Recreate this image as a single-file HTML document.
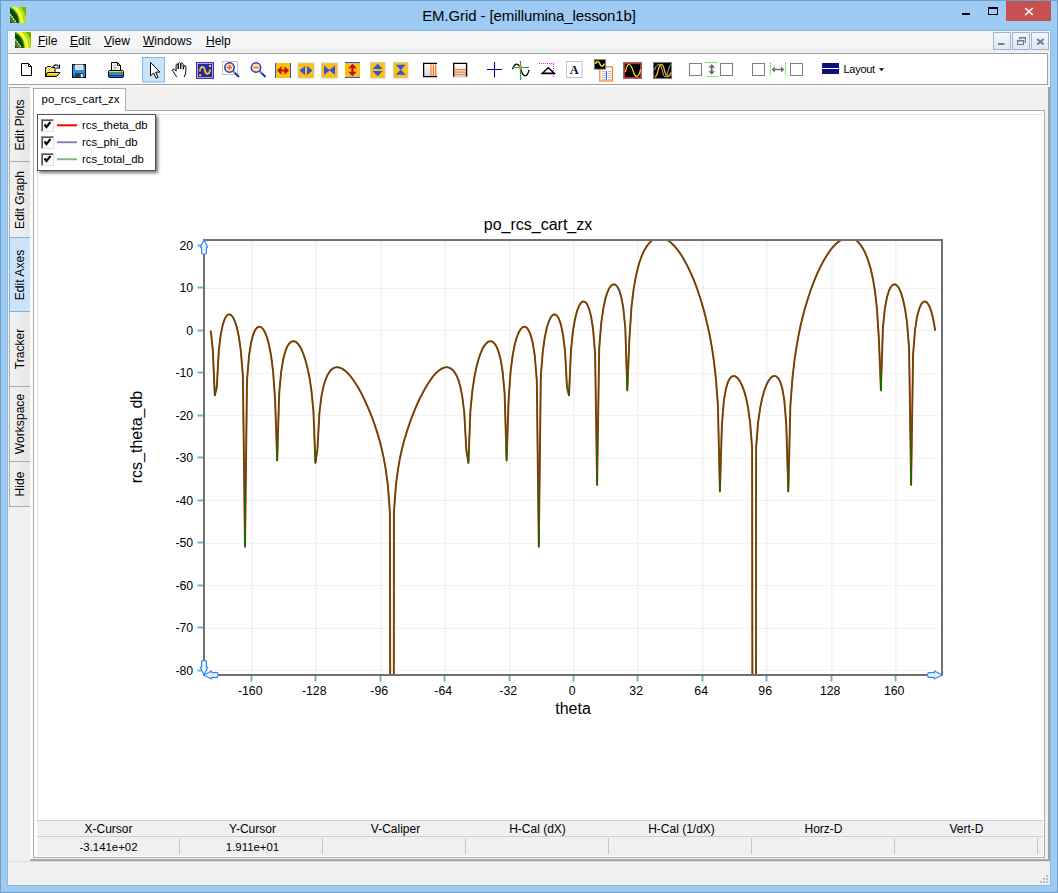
<!DOCTYPE html>
<html><head><meta charset="utf-8"><title>EM.Grid</title>
<style>
html,body{margin:0;padding:0}
body{width:1058px;height:893px;position:relative;overflow:hidden;background:#9dcbf3;font-family:"Liberation Sans",sans-serif;font-size:12px;color:#000}
.abs,.abs>*{position:absolute}
#frame{position:absolute;left:0;top:0;width:1056px;height:891px;border:1px solid #6f9fc9}
#client{position:absolute;left:7px;top:30px;width:1042px;height:854px;background:#f0f0f0;border:1px solid #8db9e3}
#title{position:absolute;left:0;top:6px;width:1058px;text-align:center;font-size:15px;line-height:20px;color:#000;letter-spacing:-0.1px}
#menubar{position:absolute;left:8px;top:31px;width:1042px;height:18px;background:#f5f6f7}
#menugap{position:absolute;left:8px;top:49px;width:1042px;height:4px;background:linear-gradient(#eaebec,#f3f3f4)}
.mi{position:absolute;top:34px;font-size:12px;line-height:15px;color:#000}
.mi u{text-decoration:underline;text-underline-offset:1px}
#toolbar{position:absolute;left:8px;top:53px;width:1038px;height:30px;background:#fff;border:1px solid #a0a0a0;border-left:1px solid #f4f4f4}
.mdib{position:absolute;top:32px;width:16px;height:16px;border:1px solid #9fb4cc;background:linear-gradient(#f3f7fb,#dde8f3)}
.stab{position:absolute;left:9px;width:21px;border:1px solid #acacac;border-right:none;background:linear-gradient(90deg,#f2f2f2,#e6e6e6);box-sizing:border-box}
.stab span{position:absolute;left:50%;top:50%;white-space:nowrap;transform:translate(-50%,-50%) rotate(-90deg);font-size:12.1px}
.stab.sel{background:#cce4fb;border-color:#7ab5ea}
#tab{position:absolute;left:33px;top:88px;width:93px;height:23px;background:#fff;border:1px solid #acacac;border-bottom:none;box-sizing:border-box;font-size:11.5px;line-height:21px;text-align:left;padding-left:7.6px}
#page{position:absolute;left:33px;top:110px;width:1012px;height:748px;border:1px solid #acacac;box-sizing:border-box;background:#fff}
#plot{position:absolute;left:37px;top:114px;width:1006px;height:706px;background:#fff;border-top:1px solid #e3e3e3;border-left:1px solid #e3e3e3;box-sizing:border-box}
#legend{position:absolute;left:37px;top:114px;width:119px;height:57px;background:#fff;border:1px solid #555;box-sizing:border-box;box-shadow:2px 2px 3px rgba(0,0,0,.55)}
.cb{position:absolute;left:3px;width:11px;height:11px;border:1px solid #8e8e8e;border-right-color:#e0e0e0;border-bottom-color:#e0e0e0;background:#fff}
.cb::before{content:"";position:absolute;left:0;top:0;width:10px;height:10px;border-left:1px solid #555;border-top:1px solid #555}
.lt{position:absolute;left:44px;font-size:11.35px;line-height:13px;white-space:nowrap}
.xl{position:absolute;top:684.1px;width:60px;text-align:center;font-size:12.3px;line-height:14px}
.yl{position:absolute;left:140px;width:53.2px;text-align:right;font-size:12.3px;line-height:14px}
.g{stroke:#e6e6e6;stroke-width:1;stroke-dasharray:1 1}.gv{stroke:#ececec;stroke-width:2}
#stat{position:absolute;left:37px;top:820px;width:1006px;height:36px;background:#f0f0f0;border-top:1px solid #d0d0d0;box-sizing:border-box}
.sh{position:absolute;top:822px;width:143px;text-align:center;font-size:12px;line-height:14px}
.sv{position:absolute;top:840px;width:143px;text-align:center;font-size:11.4px;line-height:14px}
.sep{position:absolute;top:838px;width:1px;height:16px;background:#c4c4c4}
</style></head><body>
<div id="frame"></div>
<!-- title bar -->
<div id="title">EM.Grid - [emillumina_lesson1b]</div>
<svg class="abs" style="position:absolute;left:0;top:0" width="1058" height="30">
<defs><linearGradient id="lg1" x1="0" y1="0" x2="1" y2="1"><stop offset="0" stop-color="#1d4a0c"/><stop offset=".45" stop-color="#3d7a10"/><stop offset=".7" stop-color="#c8e020"/><stop offset="1" stop-color="#5a9a10"/></linearGradient>
<g id="logo"><clipPath id="lc"><rect x="0" y="0" width="16" height="16"/></clipPath><g clip-path="url(#lc)">
<rect x="0" y="0" width="16" height="16" fill="#7db400"/>
<circle cx="-8" cy="15.6" r="24.6" fill="#a4d810"/>
<circle cx="-8" cy="15.6" r="23.4" fill="#d4f028"/>
<circle cx="-8" cy="15.6" r="22.5" fill="#88b800"/>
<circle cx="-8" cy="15.6" r="21.8" fill="#f6ff3c"/>
<circle cx="-8" cy="15.6" r="18.2" fill="#8fd020"/>
<circle cx="-8" cy="15.6" r="17.3" fill="#1f7a10"/>
<circle cx="-8" cy="15.6" r="16.2" fill="#084808"/>
<circle cx="-8" cy="15.6" r="13" fill="#0f5f0c"/>
<circle cx="-8" cy="15.6" r="11.6" fill="#073c06"/>
<path d="M0 7 L7 16 L0 16Z" fill="#4d7c10"/>
<path d="M0 13.5 L2.5 16 L0 16Z" fill="#3a3a30"/>
<path d="M0.3 7.3 L6 15.3" stroke="#fff" stroke-width="1.3" stroke-dasharray="1.5 1.1"/>
</g></g></defs>
<use href="#logo" x="10" y="7"/>
<rect x="962" y="13" width="8" height="2" fill="#000"/>
<rect x="988.5" y="8" width="9" height="6.5" fill="none" stroke="#000" stroke-width="1"/><rect x="988" y="7" width="10" height="2" fill="#000"/>
<rect x="1006" y="1" width="45" height="20" fill="#c75050"/>
<path d="M1025.200 8 L1032.800 15 M1032.800 8 L1025.200 15" stroke="#fff" stroke-width="1.600"/>
</svg>
<div id="client"></div>
<div id="menubar"></div><div id="menugap"></div>
<svg style="position:absolute;left:15px;top:32px" width="16" height="16"><use href="#logo"/></svg>
<div class="mi" style="left:38px"><u>F</u>ile</div>
<div class="mi" style="left:70px"><u>E</u>dit</div>
<div class="mi" style="left:104px"><u>V</u>iew</div>
<div class="mi" style="left:143px"><u>W</u>indows</div>
<div class="mi" style="left:206px"><u>H</u>elp</div>
<div class="mdib" style="left:993px"></div><div class="mdib" style="left:1012px"></div><div class="mdib" style="left:1031px"></div>
<svg style="position:absolute;left:993px;top:32px" width="58" height="18">
<rect x="5" y="11" width="6.500" height="2" fill="#6c7d96"/>
<path d="M26.500 7.500 v-2 h6 v4.500 h-2 M24.500 8.500 h6 v4 h-6z M26.500 6 h6 M24.500 9 h6" stroke="#6c7d96" stroke-width="1.100" fill="none"/>
<path d="M44.200 6.900 L50.600 12.600 M50.600 6.900 L44.200 12.600" stroke="#6c7d96" stroke-width="2"/>
</svg>
<div style="position:absolute;left:8px;top:85px;width:1042px;height:2px;background:#fafafa"></div>
<div id="toolbar"></div>
<svg style="position:absolute;left:0;top:0" width="1058" height="90" font-family="Liberation Sans, sans-serif">
<!-- new -->
<path d="M21.5 63.5 h7 l3 3 v9 h-10z" fill="#fff" stroke="#000"/><path d="M28.5 63.5 v3 h3" fill="none" stroke="#000"/>
<!-- open -->
<defs><pattern id="chk" width="2" height="2" patternUnits="userSpaceOnUse"><rect width="2" height="2" fill="#fff6b0"/><rect width="1" height="1" fill="#f4d848"/><rect x="1" y="1" width="1" height="1" fill="#f4d848"/></pattern></defs>
<path d="M45.500 76.500 V67.500 h1 l1 -1 h3 l1 1 h3.500 v5" fill="url(#chk)" stroke="#000"/>
<path d="M45.500 76.500 L47.500 72.500 H60 L56.500 76.500Z" fill="#f7c200" stroke="#000" stroke-linejoin="round"/>
<path d="M48.300 73.500 H58.300" stroke="#ffe680" stroke-width="1"/>
<path d="M52.800 67 Q55.500 63 58.700 66.500" fill="none" stroke="#000" stroke-width="1.100"/>
<path d="M59.500 64.400 V68 H56" fill="none" stroke="#000" stroke-width="1.100"/>
<!-- save -->
<rect x="72.500" y="64.500" width="13" height="13" fill="#2090e8" stroke="#000"/>
<rect x="75.500" y="65" width="7.500" height="4.500" fill="#dcdcdc" stroke="#f2f2f2" stroke-width=".8"/>
<rect x="75" y="73" width="8.700" height="4.500" fill="#3c3c3c"/><rect x="80.800" y="74" width="2" height="3.200" fill="#fff"/>
<rect x="73" y="75.500" width="1.500" height="2" fill="#3030c0"/><rect x="84" y="65" width="1" height="1.500" fill="#104080"/>
<!-- print -->
<path d="M111.500 70.500 v-8 h6 l3 3 v5z" fill="#fff" stroke="#000"/>
<path d="M117.500 62.500 v3 h3" fill="none" stroke="#000" stroke-width=".9"/>
<path d="M113.500 65.500 h2.500 M113.500 67.500 h4 M113.500 69 h3" stroke="#909090" stroke-width=".8"/>
<rect x="108.500" y="70.500" width="15" height="7" rx="1.500" fill="#1030a0" stroke="#000"/>
<rect x="109" y="71" width="14" height="1.300" fill="#dce048"/>
<rect x="109" y="72.300" width="14" height="1.300" fill="#38b868"/>
<rect x="109" y="73.600" width="14" height="1.400" fill="#2498d8"/>
<rect x="109" y="75" width="14" height="1.200" fill="#1030a0"/>
<rect x="109.300" y="76.200" width="13.400" height=".9" fill="#4878d8"/>
<rect x="119.300" y="71.700" width="1" height="1" fill="#e83030"/><rect x="121" y="71.700" width="1" height="1" fill="#e83030"/>
<!-- pointer selected -->
<rect x="142.500" y="57.500" width="22" height="24.500" fill="#cce4f7" stroke="#7ab8f0"/>
<path d="M150.500 62.300 v13.600 l3.100 -2.900 l2.500 5.300 l2 -0.900 l-2.500 -5.300 h4.200z" fill="#fff" stroke="#000" stroke-linejoin="miter"/>
<!-- hand -->
<path d="M176.700 77 L173.200 71.600 Q171.700 69.400 173.200 69 Q174.600 68.800 176.100 71.200 L176.100 64.600 Q177 62.800 178 64.600 L178.200 69 L178.400 63.300 Q179.400 61.600 180.400 63.300 L180.700 69 L181.100 63.500 Q182.100 61.900 183.100 63.700 L183.300 69.300 L184 66 Q185 64.600 185.900 66.200 L185.800 71 Q185.700 74 184.200 77" fill="#fff" stroke="#000" stroke-width=".95" stroke-linejoin="round"/>
<!-- scope -->
<rect x="196.500" y="62.500" width="17" height="16" fill="#2a2aa0" stroke="#3838b8"/>
<rect x="197.500" y="63.500" width="15" height="14" fill="none" stroke="#c8c8e8" stroke-width=".8"/>
<path d="M199.800 71.500 q0.600 -5 2.800 -4.600 q1.800 0.400 2.400 3.600 q0.600 3.400 2.500 3.400 q1.800 0 2.700 -4.400" stroke="#f5d020" stroke-width="1.700" fill="none"/>
<rect x="209" y="65" width="2" height="2" fill="#f5d020"/><rect x="199.200" y="74.200" width="2" height="2" fill="#f5d020"/>
<!-- zoom in -->
<rect x="222.500" y="61.500" width="15" height="13" fill="#fff" stroke="#c8c8c8"/>
<path d="M233 71 l6 6" stroke="#2030c0" stroke-width="2"/><path d="M233 71 l2 2" stroke="#80c020" stroke-width="1.500"/>
<circle cx="229.500" cy="67.500" r="4.700" fill="#fbe5b0" stroke="#2535c5" stroke-width="1.500"/>
<path d="M227 67.500 h5 M229.500 65 v5" stroke="#f06010" stroke-width="1.300"/>
<!-- zoom out -->
<path d="M259.500 71 l6 6" stroke="#2030c0" stroke-width="2"/><path d="M259.500 71 l2 2" stroke="#80c020" stroke-width="1.500"/>
<circle cx="256" cy="67.500" r="4.700" fill="#fbe5b0" stroke="#2535c5" stroke-width="1.500"/>
<path d="M253.500 67.500 h5" stroke="#f06010" stroke-width="1.300"/>
<!-- h expand (red) -->
<rect x="275" y="63" width="16" height="15" fill="#fcc010"/><path d="M275.500 63 v15 M290.500 63 v15" stroke="#3050e0"/>
<path d="M277 70.500 l4.500 -4.200 v3.200 h3 v-3.200 l4.500 4.200 l-4.500 4.200 v-3.200 h-3 v3.200z" fill="#c01010"/>
<!-- h arrows out -->
<rect x="298" y="63" width="16" height="15" fill="#fcc010" stroke="#c8c8c8" stroke-width=".8"/>
<path d="M299.500 70.500 l5.500 -4.500 v9z M312.500 70.500 l-5.500 -4.500 v9z" fill="#3850dc"/>
<!-- h arrows in -->
<rect x="321.500" y="63" width="16" height="15" fill="#fcc010" stroke="#c8c8c8" stroke-width=".8"/>
<path d="M329.800 70.300 l-5.800 -4.800 v9.600z M329.200 70.300 l5.800 -4.800 v9.600z" fill="#3850dc"/>
<!-- v expand (red) -->
<rect x="345" y="62.500" width="15" height="15" fill="#fcc010"/><path d="M345 62.500 h15 M345 77.500 h15" stroke="#3050e0"/>
<path d="M352.500 63.800 l4.200 4.400 h-3.100 v3.600 h3.100 l-4.200 4.400 l-4.200 -4.400 h3.100 v-3.600 h-3.100z" fill="#c01010"/>
<!-- v arrows out -->
<rect x="370.500" y="62.500" width="14.500" height="15.500" fill="#fcc010" stroke="#c8c8c8" stroke-width=".8"/>
<path d="M377.700 63.800 l5 5.200 h-10z M377.700 76.300 l5 -5.200 h-10z" fill="#3850dc"/>
<!-- v arrows in -->
<rect x="393.500" y="62.500" width="14.500" height="15.500" fill="#fcc010" stroke="#c8c8c8" stroke-width=".8"/>
<path d="M400.700 70.200 l4.900 -5.400 h-9.800z M400.700 69.400 l4.900 5.400 h-9.800z" fill="#3850dc"/>
<!-- v grid -->
<defs><linearGradient id="gg" x1="0" y1="0" x2="0" y2="1"><stop offset="0" stop-color="#fdfdfd"/><stop offset="1" stop-color="#d8d8d8"/></linearGradient></defs>
<rect x="423.500" y="63.500" width="13.500" height="13" fill="url(#gg)"/>
<path d="M437 63.400 H423.600 V76.600 H437" stroke="#000" stroke-width="1.300" fill="none"/>
<path d="M431 64.200 v11.700 M433.400 64.200 v11.700 M435.700 64.200 v11.700" stroke="#ff7a20" stroke-width="1.200"/>
<!-- h grid -->
<rect x="453.500" y="63.500" width="13" height="13.500" fill="url(#gg)"/>
<path d="M453.700 77 V63.400 H466.600 V77" stroke="#000" stroke-width="1.300" fill="none"/>
<path d="M454.400 69.700 h11.500 M454.400 72.100 h11.500 M454.400 74.500 h11.500" stroke="#ff7a20" stroke-width="1.200"/>
<path d="M453.500 76.800 h13.300" stroke="#c4c4c4" stroke-width="1"/>
<!-- crosshair -->
<path d="M487 69.500 h15 M494.500 62 v15.500" stroke="#000090" stroke-width="1.100"/>
<!-- tracker -->
<path d="M512.600 69.200 Q514.400 64 516.700 64.200 Q519.400 64.500 521 70 Q522.800 76 525.200 75.800 Q527.700 75.500 529 69.800" stroke="#000" stroke-width="1.250" fill="none"/>
<path d="M520.500 61 v19 M512 67.500 h17" stroke="#18b040" stroke-width="1.200"/>
<rect x="519" y="66" width="3" height="3" fill="#f57c1a"/>
<!-- delta -->
<path d="M539 63.500 h15 M553.500 64 v13.500" stroke="#f418e8" stroke-width="1.200" stroke-dasharray="1 1"/>
<path d="M542.400 73.300 L548.300 67.700 L554.300 73.300Z" fill="#fff" stroke="#000" stroke-width="1.400" stroke-linejoin="miter"/>
<path d="M541.500 73.600 h13.600" stroke="#000" stroke-width="1.300"/>
<!-- A -->
<rect x="566.500" y="61.500" width="15.500" height="16" fill="#fff" stroke="#c4c4c4"/>
<text x="574.300" y="73.600" font-family="Liberation Serif, serif" font-weight="bold" font-size="12.300" text-anchor="middle" fill="#0a0a28">A</text>
<!-- scope + doc -->
<rect x="599.800" y="66.800" width="12.700" height="14.200" fill="#fff" stroke="#f58230" stroke-width="1.200"/>
<path d="M601.500 71.500 h3.500 M601.500 73.500 h3.500 M601.500 75.500 h3.500 M601.500 77.500 h3.500 M601.500 79.500 h3.500 M608 71.500 h3.500 M608 73.500 h3.500 M608 75.500 h3.500 M608 77.500 h3.500 M608 79.500 h3.500" stroke="#b4b4b8" stroke-width=".9"/>
<path d="M606.400 71.200 v8.800" stroke="#3858e8" stroke-width="1.300"/>
<rect x="594.300" y="59.600" width="11.400" height="9.600" fill="#000" stroke="#8c8c8c" stroke-width=".9"/>
<path d="M595.600 64 q0.300 -2.600 2 -2.600 q1.600 0 2.200 2.400 q0.600 2.400 2.200 2.400 q1.600 0 2.200 -2.600" stroke="#f5d818" stroke-width="1.500" fill="none"/>
<!-- scope red -->
<rect x="623.500" y="62.500" width="18" height="16" fill="#000" stroke="#7c7c7c" stroke-width="1"/>
<rect x="624.500" y="63.500" width="16" height="14" fill="#000" stroke="#e01c1c" stroke-width="1.100"/>
<path d="M625.400 72 Q627 64.300 629.200 64.500 Q631.300 64.700 633 70.500 Q634.700 76.600 636.800 76.400 Q639 76.200 640.600 69.500" stroke="#f5e018" stroke-width="1.250" fill="none"/>
<!-- scope dual -->
<rect x="653.500" y="62.500" width="18" height="16" fill="#000" stroke="#7c7c7c" stroke-width="1.100"/>
<path d="M654.500 70 Q656.500 64 659 64.500 Q661.300 65 662.500 71 Q663.500 77 665 77 Q667 77 668.300 70 Q669.300 65.500 670.800 64.500" stroke="#b4b4b4" stroke-width="1" fill="none"/>
<path d="M654.800 77.200 Q657 76 658.500 69 Q659.700 64.300 661.400 64.500 Q663.200 64.700 664.700 71 Q666.200 76.800 668 76.500 Q669.800 76.200 671 72.500" stroke="#f5b818" stroke-width="1.300" fill="none"/>
<!-- boxes vertical spacing -->
<rect x="689.500" y="63.500" width="12" height="12" fill="#fff" stroke="#808080" stroke-width="1.100"/>
<rect x="720.500" y="63.500" width="12" height="12" fill="#fff" stroke="#808080" stroke-width="1.100"/>
<path d="M705.500 62.500 h12.500 M707.500 76.500 h10.500" stroke="#38dc20" stroke-width="1" stroke-dasharray="2 1"/>
<path d="M711.700 64.300 l3.400 3.300 h-2.500 v3.600 h2.500 l-3.400 3.400 l-3.400 -3.400 h2.500 v-3.600 h-2.500z" fill="#666"/>
<!-- boxes horizontal spacing -->
<rect x="752.500" y="63.500" width="12" height="12" fill="#fff" stroke="#808080"/>
<rect x="790.500" y="63.500" width="12" height="12" fill="#fff" stroke="#808080"/>
<path d="M770.500 62.500 v13 M785.500 62.500 v13" stroke="#38dc20" stroke-width="1" stroke-dasharray="1.500 1"/>
<path d="M771.500 69.500 l3.500 -3 v2.300 h6 v-2.300 l3.500 3 l-3.500 3 v-2.300 h-6 v2.300z" fill="#707070"/>
<!-- layout -->
<rect x="822" y="63" width="17" height="11" fill="#10107c"/><rect x="822" y="68" width="17" height="1" fill="#fff"/>
<text x="843.500" y="73" font-size="11" letter-spacing="-0.28" fill="#000">Layout</text>
<path d="M878.800 68.300 h5.400 l-2.700 2.800z" fill="#000"/>
</svg>

<!-- side tabs -->
<div class="stab" style="top:87px;height:75px"><span>Edit Plots</span></div>
<div class="stab" style="top:161px;height:77px"><span>Edit Graph</span></div>
<div class="stab" style="top:311px;height:76px"><span>Tracker</span></div>
<div class="stab" style="top:386px;height:76px"><span>Workspace</span></div>
<div class="stab" style="top:461px;height:46px"><span>Hide</span></div>
<div class="stab sel" style="top:237px;height:75px"><span>Edit Axes</span></div>
<div style="position:absolute;left:1048px;top:87px;width:2px;height:773px;background:#a0a0a0"></div>
<!-- tab page -->
<div style="position:absolute;left:30px;top:87px;width:3px;height:772px;background:#fdfdfd"></div>
<div id="page"></div>
<div id="tab">po_rcs_cart_zx</div>
<div id="plot"></div>
<!-- chart -->
<svg style="position:absolute;left:0;top:0" width="1058" height="893">
<defs><clipPath id="cp"><rect x="205" y="241" width="736" height="433"/></clipPath></defs>
<line x1="251.8" y1="241" x2="251.8" y2="674" class="g gv"/>
<line x1="315.8" y1="241" x2="315.8" y2="674" class="g gv"/>
<line x1="380.8" y1="241" x2="380.8" y2="674" class="g gv"/>
<line x1="444.8" y1="241" x2="444.8" y2="674" class="g gv"/>
<line x1="509.8" y1="241" x2="509.8" y2="674" class="g gv"/>
<line x1="573.8" y1="241" x2="573.8" y2="674" class="g gv"/>
<line x1="637.8" y1="241" x2="637.8" y2="674" class="g gv"/>
<line x1="702.8" y1="241" x2="702.8" y2="674" class="g gv"/>
<line x1="766.8" y1="241" x2="766.8" y2="674" class="g gv"/>
<line x1="831.8" y1="241" x2="831.8" y2="674" class="g gv"/>
<line x1="895.8" y1="241" x2="895.8" y2="674" class="g gv"/>
<line x1="205" y1="245.5" x2="941" y2="245.5" class="g"/>
<line x1="205" y1="288.5" x2="941" y2="288.5" class="g"/>
<line x1="205" y1="330.5" x2="941" y2="330.5" class="g"/>
<line x1="205" y1="373.5" x2="941" y2="373.5" class="g"/>
<line x1="205" y1="415.5" x2="941" y2="415.5" class="g"/>
<line x1="205" y1="458.5" x2="941" y2="458.5" class="g"/>
<line x1="205" y1="500.5" x2="941" y2="500.5" class="g"/>
<line x1="205" y1="543.5" x2="941" y2="543.5" class="g"/>
<line x1="205" y1="585.5" x2="941" y2="585.5" class="g"/>
<line x1="205" y1="628.5" x2="941" y2="628.5" class="g"/>
<line x1="205" y1="670.5" x2="941" y2="670.5" class="g"/>
<g clip-path="url(#cp)" fill="none" stroke-linejoin="round">
<path d="M210.7 330.7 L212.8 349.7 L214.8 395.4 L216.8 387.5 L218.8 350.4 L220.8 334.1 L222.8 324.6 L224.8 318.8 L226.8 315.5 L228.9 314.3 L230.9 314.9 L232.9 317.1 L234.9 321.3 L236.9 327.7 L238.9 337.1 L240.9 351.3 L242.9 376.4 L245.0 546.8 L247.0 380.5 L249.0 356.0 L251.0 343.1 L253.0 335.2 L255.0 330.3 L257.0 327.6 L259.0 326.6 L261.1 327.1 L263.1 329.1 L265.1 332.6 L267.1 337.8 L269.1 345.3 L271.1 355.8 L273.1 371.5 L275.1 399.9 L277.2 460.5 L279.2 393.3 L281.2 371.5 L283.2 359.4 L285.2 351.7 L287.2 346.6 L289.2 343.4 L291.2 341.7 L293.3 341.1 L295.3 341.6 L297.3 343.1 L299.3 345.6 L301.3 349.1 L303.3 353.8 L305.3 359.7 L307.3 367.2 L309.4 377.0 L311.4 390.3 L313.4 410.6 L315.4 463.0 L317.4 449.8 L319.4 413.0 L321.4 396.6 L323.4 386.6 L325.5 379.8 L327.5 375.1 L329.5 371.8 L331.5 369.5 L333.5 368.1 L335.5 367.4 L337.5 367.2 L339.5 367.6 L341.6 368.4 L343.6 369.6 L345.6 371.1 L347.6 373.0 L349.6 375.2 L351.6 377.7 L353.6 380.5 L355.6 383.5 L357.7 386.8 L359.7 390.3 L361.7 394.1 L363.7 398.1 L365.7 402.4 L367.7 406.9 L369.7 411.7 L371.8 416.8 L373.8 422.2 L375.8 428.1 L377.8 434.4 L379.8 441.4 L381.8 449.2 L383.8 458.4 L385.8 469.8 L387.9 485.4 L389.9 512.6 L390.2 681.0 M393.8 681.0 L393.9 512.6 L395.9 485.4 L397.9 469.8 L399.9 458.4 L401.9 449.2 L403.9 441.4 L406.0 434.4 L408.0 428.1 L410.0 422.2 L412.0 416.8 L414.0 411.7 L416.0 406.9 L418.0 402.4 L420.0 398.1 L422.1 394.1 L424.1 390.3 L426.1 386.8 L428.1 383.5 L430.1 380.5 L432.1 377.7 L434.1 375.2 L436.1 373.0 L438.2 371.1 L440.2 369.6 L442.2 368.4 L444.2 367.6 L446.2 367.2 L448.2 367.4 L450.2 368.1 L452.2 369.5 L454.3 371.8 L456.3 375.1 L458.3 379.8 L460.3 386.6 L462.3 396.6 L464.3 413.0 L466.3 449.8 L468.4 463.0 L470.4 410.6 L472.4 390.3 L474.4 377.0 L476.4 367.2 L478.4 359.7 L480.4 353.8 L482.4 349.1 L484.4 345.6 L486.5 343.1 L488.5 341.6 L490.5 341.1 L492.5 341.7 L494.5 343.4 L496.5 346.6 L498.5 351.7 L500.6 359.4 L502.6 371.5 L504.6 393.3 L506.6 460.5 L508.6 399.9 L510.6 371.5 L512.6 355.8 L514.6 345.3 L516.6 337.8 L518.7 332.6 L520.7 329.1 L522.7 327.1 L524.7 326.6 L526.7 327.6 L528.7 330.3 L530.7 335.2 L532.8 343.1 L534.8 356.0 L536.8 380.5 L538.8 546.8 L540.8 376.4 L542.8 351.3 L544.8 337.1 L546.8 327.7 L548.9 321.3 L550.9 317.1 L552.9 314.9 L554.9 314.3 L556.9 315.5 L558.9 318.8 L560.9 324.6 L562.9 334.1 L565.0 350.4 L567.0 387.5 L569.0 395.4 L571.0 349.7 L573.0 330.7 L575.0 319.0 L577.0 311.2 L579.0 305.9 L581.0 302.8 L583.1 301.4 L585.1 301.9 L587.1 304.2 L589.1 308.8 L591.1 316.5 L593.1 329.3 L595.1 354.0 L597.1 485.1 L599.2 348.4 L601.2 323.4 L603.2 309.1 L605.2 299.5 L607.2 292.8 L609.2 288.3 L611.2 285.5 L613.2 284.3 L615.3 284.6 L617.3 286.6 L619.3 290.5 L621.3 297.2 L623.3 308.1 L625.3 328.0 L627.3 390.4 L629.4 339.3 L631.4 308.0 L633.4 290.7 L635.4 278.7 L637.4 269.7 L639.4 262.5 L641.4 256.8 L643.4 252.1 L645.5 248.3 L647.5 245.2 L649.5 242.8 L651.5 240.8 L653.5 239.4 L655.5 238.4 L657.5 237.8 L659.5 237.6 L661.5 237.8 L663.6 238.2 L665.6 239.0 L667.6 240.2 L669.6 241.6 L671.6 243.2 L673.6 245.2 L675.6 247.4 L677.6 249.9 L679.7 252.7 L681.7 255.8 L683.7 259.1 L685.7 262.7 L687.7 266.6 L689.7 270.7 L691.7 275.2 L693.8 280.0 L695.8 285.2 L697.8 290.7 L699.8 296.7 L701.8 303.2 L703.8 310.2 L705.8 318.0 L707.8 326.5 L709.9 336.2 L711.9 347.5 L713.9 361.0 L715.9 378.6 L717.9 405.3 L719.9 491.5 L721.9 424.9 L723.9 400.2 L726.0 388.5 L728.0 381.9 L730.0 378.2 L732.0 376.4 L734.0 375.9 L736.0 376.7 L738.0 378.5 L740.0 381.4 L742.0 385.4 L744.1 390.9 L746.1 398.1 L748.1 408.0 L750.1 422.4 L752.1 447.7 L752.4 681.0 M756.0 681.0 L756.1 447.7 L758.1 422.4 L760.2 408.0 L762.2 398.1 L764.2 390.9 L766.2 385.4 L768.2 381.4 L770.2 378.5 L772.2 376.7 L774.2 375.9 L776.3 376.4 L778.3 378.2 L780.3 381.9 L782.3 388.5 L784.3 400.2 L786.3 424.9 L788.3 491.5 L790.4 405.3 L792.4 378.6 L794.4 361.0 L796.4 347.5 L798.4 336.2 L800.4 326.5 L802.4 318.0 L804.4 310.2 L806.5 303.2 L808.5 296.7 L810.5 290.7 L812.5 285.2 L814.5 280.0 L816.5 275.2 L818.5 270.7 L820.5 266.6 L822.5 262.7 L824.6 259.1 L826.6 255.8 L828.6 252.7 L830.6 249.9 L832.6 247.4 L834.6 245.2 L836.6 243.2 L838.7 241.6 L840.7 240.2 L842.7 239.0 L844.7 238.2 L846.7 237.8 L848.7 237.6 L850.7 237.8 L852.7 238.4 L854.8 239.4 L856.8 240.8 L858.8 242.8 L860.8 245.2 L862.8 248.3 L864.8 252.1 L866.8 256.8 L868.8 262.5 L870.9 269.7 L872.9 278.7 L874.9 290.7 L876.9 308.0 L878.9 339.3 L880.9 390.4 L882.9 328.0 L884.9 308.1 L887.0 297.2 L889.0 290.5 L891.0 286.6 L893.0 284.6 L895.0 284.3 L897.0 285.5 L899.0 288.3 L901.0 292.8 L903.0 299.5 L905.1 309.1 L907.1 323.4 L909.1 348.4 L911.1 485.1 L913.1 354.0 L915.1 329.3 L917.1 316.5 L919.2 308.8 L921.2 304.2 L923.2 301.9 L925.2 301.4 L927.2 302.8 L929.2 305.9 L931.2 311.2 L933.2 319.0 L935.2 330.7" stroke="#ff1818" stroke-width="1.95"/>
<g stroke="rgba(0,112,0,0.8)" stroke-width="1.3"><path d="M210.7 330.7 L212.8 349.7 L214.8 395.4"/><path d="M214.8 395.4 L216.8 387.5 L218.8 350.4 L220.8 334.1 L222.8 324.6 L224.8 318.8 L226.8 315.5 L228.9 314.3 L230.9 314.9 L232.9 317.1 L234.9 321.3 L236.9 327.7 L238.9 337.1 L240.9 351.3 L242.9 376.4 L245.0 546.8"/><path d="M245.0 546.8 L247.0 380.5 L249.0 356.0 L251.0 343.1 L253.0 335.2 L255.0 330.3 L257.0 327.6 L259.0 326.6 L261.1 327.1 L263.1 329.1 L265.1 332.6 L267.1 337.8 L269.1 345.3 L271.1 355.8 L273.1 371.5 L275.1 399.9 L277.2 460.5"/><path d="M277.2 460.5 L279.2 393.3 L281.2 371.5 L283.2 359.4 L285.2 351.7 L287.2 346.6 L289.2 343.4 L291.2 341.7 L293.3 341.1 L295.3 341.6 L297.3 343.1 L299.3 345.6 L301.3 349.1 L303.3 353.8 L305.3 359.7 L307.3 367.2 L309.4 377.0 L311.4 390.3 L313.4 410.6 L315.4 463.0"/><path d="M315.4 463.0 L317.4 449.8 L319.4 413.0 L321.4 396.6 L323.4 386.6 L325.5 379.8 L327.5 375.1 L329.5 371.8 L331.5 369.5 L333.5 368.1 L335.5 367.4 L337.5 367.2 L339.5 367.6 L341.6 368.4 L343.6 369.6 L345.6 371.1 L347.6 373.0 L349.6 375.2 L351.6 377.7 L353.6 380.5 L355.6 383.5 L357.7 386.8 L359.7 390.3 L361.7 394.1 L363.7 398.1 L365.7 402.4 L367.7 406.9 L369.7 411.7 L371.8 416.8 L373.8 422.2 L375.8 428.1 L377.8 434.4 L379.8 441.4 L381.8 449.2 L383.8 458.4 L385.8 469.8 L387.9 485.4 L389.9 512.6 L390.2 681.0"/><path d="M393.8 681.0 L393.9 512.6 L395.9 485.4 L397.9 469.8 L399.9 458.4 L401.9 449.2 L403.9 441.4 L406.0 434.4 L408.0 428.1 L410.0 422.2 L412.0 416.8 L414.0 411.7 L416.0 406.9 L418.0 402.4 L420.0 398.1 L422.1 394.1 L424.1 390.3 L426.1 386.8 L428.1 383.5 L430.1 380.5 L432.1 377.7 L434.1 375.2 L436.1 373.0 L438.2 371.1 L440.2 369.6 L442.2 368.4 L444.2 367.6 L446.2 367.2 L448.2 367.4 L450.2 368.1 L452.2 369.5 L454.3 371.8 L456.3 375.1 L458.3 379.8 L460.3 386.6 L462.3 396.6 L464.3 413.0 L466.3 449.8 L468.4 463.0"/><path d="M468.4 463.0 L470.4 410.6 L472.4 390.3 L474.4 377.0 L476.4 367.2 L478.4 359.7 L480.4 353.8 L482.4 349.1 L484.4 345.6 L486.5 343.1 L488.5 341.6 L490.5 341.1 L492.5 341.7 L494.5 343.4 L496.5 346.6 L498.5 351.7 L500.6 359.4 L502.6 371.5 L504.6 393.3 L506.6 460.5"/><path d="M506.6 460.5 L508.6 399.9 L510.6 371.5 L512.6 355.8 L514.6 345.3 L516.6 337.8 L518.7 332.6 L520.7 329.1 L522.7 327.1 L524.7 326.6 L526.7 327.6 L528.7 330.3 L530.7 335.2 L532.8 343.1 L534.8 356.0 L536.8 380.5 L538.8 546.8"/><path d="M538.8 546.8 L540.8 376.4 L542.8 351.3 L544.8 337.1 L546.8 327.7 L548.9 321.3 L550.9 317.1 L552.9 314.9 L554.9 314.3 L556.9 315.5 L558.9 318.8 L560.9 324.6 L562.9 334.1 L565.0 350.4 L567.0 387.5 L569.0 395.4"/><path d="M569.0 395.4 L571.0 349.7 L573.0 330.7 L575.0 319.0 L577.0 311.2 L579.0 305.9 L581.0 302.8 L583.1 301.4 L585.1 301.9 L587.1 304.2 L589.1 308.8 L591.1 316.5 L593.1 329.3 L595.1 354.0 L597.1 485.1"/><path d="M597.1 485.1 L599.2 348.4 L601.2 323.4 L603.2 309.1 L605.2 299.5 L607.2 292.8 L609.2 288.3 L611.2 285.5 L613.2 284.3 L615.3 284.6 L617.3 286.6 L619.3 290.5 L621.3 297.2 L623.3 308.1 L625.3 328.0 L627.3 390.4"/><path d="M627.3 390.4 L629.4 339.3 L631.4 308.0 L633.4 290.7 L635.4 278.7 L637.4 269.7 L639.4 262.5 L641.4 256.8 L643.4 252.1 L645.5 248.3 L647.5 245.2 L649.5 242.8 L651.5 240.8 L653.5 239.4 L655.5 238.4 L657.5 237.8 L659.5 237.6 L661.5 237.8 L663.6 238.2 L665.6 239.0 L667.6 240.2 L669.6 241.6 L671.6 243.2 L673.6 245.2 L675.6 247.4 L677.6 249.9 L679.7 252.7 L681.7 255.8 L683.7 259.1 L685.7 262.7 L687.7 266.6 L689.7 270.7 L691.7 275.2 L693.8 280.0 L695.8 285.2 L697.8 290.7 L699.8 296.7 L701.8 303.2 L703.8 310.2 L705.8 318.0 L707.8 326.5 L709.9 336.2 L711.9 347.5 L713.9 361.0 L715.9 378.6 L717.9 405.3 L719.9 491.5"/><path d="M719.9 491.5 L721.9 424.9 L723.9 400.2 L726.0 388.5 L728.0 381.9 L730.0 378.2 L732.0 376.4 L734.0 375.9 L736.0 376.7 L738.0 378.5 L740.0 381.4 L742.0 385.4 L744.1 390.9 L746.1 398.1 L748.1 408.0 L750.1 422.4 L752.1 447.7 L752.4 681.0"/><path d="M756.0 681.0 L756.1 447.7 L758.1 422.4 L760.2 408.0 L762.2 398.1 L764.2 390.9 L766.2 385.4 L768.2 381.4 L770.2 378.5 L772.2 376.7 L774.2 375.9 L776.3 376.4 L778.3 378.2 L780.3 381.9 L782.3 388.5 L784.3 400.2 L786.3 424.9 L788.3 491.5"/><path d="M788.3 491.5 L790.4 405.3 L792.4 378.6 L794.4 361.0 L796.4 347.5 L798.4 336.2 L800.4 326.5 L802.4 318.0 L804.4 310.2 L806.5 303.2 L808.5 296.7 L810.5 290.7 L812.5 285.2 L814.5 280.0 L816.5 275.2 L818.5 270.7 L820.5 266.6 L822.5 262.7 L824.6 259.1 L826.6 255.8 L828.6 252.7 L830.6 249.9 L832.6 247.4 L834.6 245.2 L836.6 243.2 L838.7 241.6 L840.7 240.2 L842.7 239.0 L844.7 238.2 L846.7 237.8 L848.7 237.6 L850.7 237.8 L852.7 238.4 L854.8 239.4 L856.8 240.8 L858.8 242.8 L860.8 245.2 L862.8 248.3 L864.8 252.1 L866.8 256.8 L868.8 262.5 L870.9 269.7 L872.9 278.7 L874.9 290.7 L876.9 308.0 L878.9 339.3 L880.9 390.4"/><path d="M880.9 390.4 L882.9 328.0 L884.9 308.1 L887.0 297.2 L889.0 290.5 L891.0 286.6 L893.0 284.6 L895.0 284.3 L897.0 285.5 L899.0 288.3 L901.0 292.8 L903.0 299.5 L905.1 309.1 L907.1 323.4 L909.1 348.4 L911.1 485.1"/><path d="M911.1 485.1 L913.1 354.0 L915.1 329.3 L917.1 316.5 L919.2 308.8 L921.2 304.2 L923.2 301.9 L925.2 301.4 L927.2 302.8 L929.2 305.9 L931.2 311.2 L933.2 319.0 L935.2 330.7"/></g><g stroke="rgba(0,118,0,0.85)" stroke-width="1.2" stroke-linejoin="miter"><path d="M214.2 381.4 L214.8 395.4 L215.4 393.0 M244.8 532.8 L245.0 546.8 L245.1 533.1 M276.7 447.9 L277.2 460.5 L277.6 446.5 M314.9 449.0 L315.4 463.0 L315.9 459.5 M467.8 459.5 L468.4 463.0 L468.9 449.0 M506.2 446.5 L506.6 460.5 L507.0 447.9 M538.6 533.1 L538.8 546.8 L539.0 532.8 M568.4 393.0 L569.0 395.4 L569.6 381.4 M596.9 471.7 L597.1 485.1 L597.4 471.1 M626.9 376.4 L627.3 390.4 L627.8 378.9 M719.6 477.5 L719.9 491.5 L720.2 480.7 M788.0 480.7 L788.3 491.5 L788.7 477.5 M880.5 378.9 L880.9 390.4 L881.4 376.4 M910.9 471.1 L911.1 485.1 L911.3 471.7"/></g>
</g>
<rect x="204" y="240" width="738" height="435" fill="none" stroke="#707070" stroke-width="2"/>
<rect x="250.5" y="676" width="2" height="5.5" fill="#76b7b3"/>
<rect x="314.5" y="676" width="2" height="5.5" fill="#76b7b3"/>
<rect x="379.5" y="676" width="2" height="5.5" fill="#76b7b3"/>
<rect x="443.5" y="676" width="2" height="5.5" fill="#76b7b3"/>
<rect x="508.5" y="676" width="2" height="5.5" fill="#76b7b3"/>
<rect x="572.5" y="676" width="2" height="5.5" fill="#76b7b3"/>
<rect x="636.5" y="676" width="2" height="5.5" fill="#76b7b3"/>
<rect x="701.5" y="676" width="2" height="5.5" fill="#76b7b3"/>
<rect x="765.5" y="676" width="2" height="5.5" fill="#76b7b3"/>
<rect x="830.5" y="676" width="2" height="5.5" fill="#76b7b3"/>
<rect x="894.5" y="676" width="2" height="5.5" fill="#76b7b3"/>
<rect x="197.5" y="244.5" width="5.5" height="2" fill="#76b7b3"/>
<rect x="197.5" y="286.5" width="5.5" height="2" fill="#76b7b3"/>
<rect x="197.5" y="329.5" width="5.5" height="2" fill="#76b7b3"/>
<rect x="197.5" y="371.5" width="5.5" height="2" fill="#76b7b3"/>
<rect x="197.5" y="414.5" width="5.5" height="2" fill="#76b7b3"/>
<rect x="197.5" y="456.5" width="5.5" height="2" fill="#76b7b3"/>
<rect x="197.5" y="499.5" width="5.5" height="2" fill="#76b7b3"/>
<rect x="197.5" y="541.5" width="5.5" height="2" fill="#76b7b3"/>
<rect x="197.5" y="584.5" width="5.5" height="2" fill="#76b7b3"/>
<rect x="197.5" y="626.5" width="5.5" height="2" fill="#76b7b3"/>
<rect x="197.5" y="669.5" width="5.5" height="2" fill="#76b7b3"/>
<g fill="#f3f1ee" stroke="#2a8cff" stroke-width="1.15" stroke-linejoin="round">
<path d="M204 239.9 L207.7 247.2 L206.4 247.2 L206.4 253.6 Q204 255 201.600 253.600 L201.600 247.200 L200.300 247.200Z"/>
<path d="M204 675 L207.800 667.200 L206.400 667.200 L206.400 661 Q204 659.600 201.600 661 L201.600 667.200 L200.200 667.200Z"/>
<path d="M203.800 675 L211.600 671.100 L211.600 672.600 L217.500 672.600 Q218.900 675 217.500 677.400 L211.600 677.400 L211.600 678.900Z"/>
<path d="M942.300 675 L934.400 671.100 L934.400 672.600 L928.200 672.600 Q926.800 675 928.200 677.400 L934.400 677.400 L934.400 678.900Z"/>
</g>
</svg>
<div class="xl" style="left:220.2px">-160</div>
<div class="xl" style="left:284.2px">-128</div>
<div class="xl" style="left:349.2px">-96</div>
<div class="xl" style="left:413.2px">-64</div>
<div class="xl" style="left:478.2px">-32</div>
<div class="xl" style="left:542.2px">0</div>
<div class="xl" style="left:606.2px">32</div>
<div class="xl" style="left:671.2px">64</div>
<div class="xl" style="left:735.2px">96</div>
<div class="xl" style="left:800.2px">128</div>
<div class="xl" style="left:864.2px">160</div>
<div class="yl" style="top:239.2px">20</div>
<div class="yl" style="top:281.2px">10</div>
<div class="yl" style="top:324.2px">0</div>
<div class="yl" style="top:366.2px">-10</div>
<div class="yl" style="top:409.2px">-20</div>
<div class="yl" style="top:451.2px">-30</div>
<div class="yl" style="top:494.2px">-40</div>
<div class="yl" style="top:536.2px">-50</div>
<div class="yl" style="top:579.2px">-60</div>
<div class="yl" style="top:621.2px">-70</div>
<div class="yl" style="top:664.2px">-80</div>
<div style="position:absolute;left:438px;top:216px;width:200px;text-align:center;font-size:16px;line-height:18px">po_rcs_cart_zx</div>
<div style="position:absolute;left:523px;top:700px;width:100px;text-align:center;font-size:16px;line-height:18px">theta</div>
<div style="position:absolute;left:137px;top:437px;white-space:nowrap;font-size:16px;line-height:18px;transform:translate(-50%,-50%) rotate(-90deg)">rcs_theta_db</div>
<!-- legend -->
<div id="legend">
<div class="cb" style="top:4px"></div><div class="cb" style="top:21px"></div><div class="cb" style="top:38px"></div>
<svg style="position:absolute;left:0;top:0" width="114" height="54">
<path d="M6.5 9.5 l2 2.5 l4 -5 M6.5 26.5 l2 2.5 l4 -5 M6.5 43.5 l2 2.5 l4 -5" stroke="#000" stroke-width="2.1" fill="none"/>
<rect x="19" y="9.3" width="20" height="2" fill="#ff0000"/>
<rect x="19" y="26.300" width="20" height="1.900" fill="#7f7fbf"/>
<rect x="19" y="43.300" width="20" height="1.900" fill="#78b878"/>
</svg>
<div class="lt" style="top:4px">rcs_theta_db</div><div class="lt" style="top:21px">rcs_phi_db</div><div class="lt" style="top:38px">rcs_total_db</div>
</div>
<!-- status grid -->
<div id="stat"></div>
<div style="position:absolute;left:37px;top:836px;width:1006px;height:1px;background:#d0d0d0"></div>
<div class="sh" style="left:37px">X-Cursor</div><div class="sh" style="left:181px">Y-Cursor</div><div class="sh" style="left:324px">V-Caliper</div><div class="sh" style="left:466px">H-Cal (dX)</div><div class="sh" style="left:610px">H-Cal (1/dX)</div><div class="sh" style="left:752px">Horz-D</div><div class="sh" style="left:895px">Vert-D</div>
<div class="sv" style="left:37px">-3.141e+02</div><div class="sv" style="left:181px">1.911e+01</div>
<div class="sep" style="left:179px"></div><div class="sep" style="left:322px"></div><div class="sep" style="left:465px"></div><div class="sep" style="left:608px"></div><div class="sep" style="left:751px"></div><div class="sep" style="left:894px"></div><div class="sep" style="left:1037px"></div>
<!-- bottom status bar -->
<div style="position:absolute;left:30px;top:859px;width:1020px;height:2px;background:linear-gradient(#b4b4b4,#9c9c9c)"></div>
<div style="position:absolute;left:8px;top:861px;width:1042px;height:1px;background:#dedede"></div>
<svg style="position:absolute;left:1038px;top:873px" width="12" height="12"><g fill="#bdbdbd"><rect x="8" y="2" width="2" height="2"/><rect x="5" y="5" width="2" height="2"/><rect x="8" y="5" width="2" height="2"/><rect x="2" y="8" width="2" height="2"/><rect x="5" y="8" width="2" height="2"/><rect x="8" y="8" width="2" height="2"/></g></svg>
</body></html>
